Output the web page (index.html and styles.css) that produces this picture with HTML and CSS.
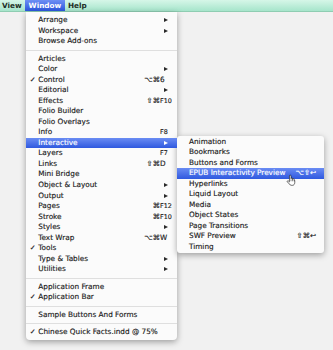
FILE: index.html
```html
<!DOCTYPE html>
<html lang="en">
<head>
  <meta charset="UTF-8">
  <title>Window menu</title>
  <link rel="stylesheet" href="styles.css">
</head>
<body>

  <div class="menubar">
    <span class="title first">View</span>
    <span class="title open">Window</span>
    <span class="title">Help</span>
  </div>

  <div class="menus">
    <div class="menu main">
      <div class="item"><span class="check"></span><span class="label">Arrange</span><span class="mods"></span><span class="key"><i class="arrow"></i></span></div>
      <div class="item"><span class="check"></span><span class="label">Workspace</span><span class="mods"></span><span class="key"><i class="arrow"></i></span></div>
      <div class="item"><span class="check"></span><span class="label">Browse Add-ons</span><span class="mods"></span><span class="key"></span></div>
      <div class="sep"></div>
      <div class="item"><span class="check"></span><span class="label">Articles</span><span class="mods"></span><span class="key"></span></div>
      <div class="item"><span class="check"></span><span class="label">Color</span><span class="mods"></span><span class="key"><i class="arrow"></i></span></div>
      <div class="item"><span class="check">✓</span><span class="label">Control</span><span class="mods">⌥⌘</span><span class="key">6</span></div>
      <div class="item"><span class="check"></span><span class="label">Editorial</span><span class="mods"></span><span class="key"><i class="arrow"></i></span></div>
      <div class="item"><span class="check"></span><span class="label">Effects</span><span class="mods">⇧⌘</span><span class="key small">F10</span></div>
      <div class="item"><span class="check"></span><span class="label">Folio Builder</span><span class="mods"></span><span class="key"></span></div>
      <div class="item"><span class="check"></span><span class="label">Folio Overlays</span><span class="mods"></span><span class="key"></span></div>
      <div class="item"><span class="check"></span><span class="label">Info</span><span class="mods"></span><span class="key small">F8</span></div>
      <div class="item active"><span class="check"></span><span class="label">Interactive</span><span class="mods"></span><span class="key"><i class="arrow"></i></span></div>
      <div class="item"><span class="check"></span><span class="label">Layers</span><span class="mods"></span><span class="key small">F7</span></div>
      <div class="item"><span class="check"></span><span class="label">Links</span><span class="mods">⇧⌘</span><span class="key">D</span></div>
      <div class="item"><span class="check"></span><span class="label">Mini Bridge</span><span class="mods"></span><span class="key"></span></div>
      <div class="item"><span class="check"></span><span class="label">Object &amp; Layout</span><span class="mods"></span><span class="key"><i class="arrow"></i></span></div>
      <div class="item"><span class="check"></span><span class="label">Output</span><span class="mods"></span><span class="key"><i class="arrow"></i></span></div>
      <div class="item"><span class="check"></span><span class="label">Pages</span><span class="mods">⌘</span><span class="key small">F12</span></div>
      <div class="item"><span class="check"></span><span class="label">Stroke</span><span class="mods">⌘</span><span class="key small">F10</span></div>
      <div class="item"><span class="check"></span><span class="label">Styles</span><span class="mods"></span><span class="key"><i class="arrow"></i></span></div>
      <div class="item"><span class="check"></span><span class="label">Text Wrap</span><span class="mods">⌥⌘</span><span class="key">W</span></div>
      <div class="item"><span class="check">✓</span><span class="label">Tools</span><span class="mods"></span><span class="key"></span></div>
      <div class="item"><span class="check"></span><span class="label">Type &amp; Tables</span><span class="mods"></span><span class="key"><i class="arrow"></i></span></div>
      <div class="item"><span class="check"></span><span class="label">Utilities</span><span class="mods"></span><span class="key"><i class="arrow"></i></span></div>
      <div class="sep"></div>
      <div class="item"><span class="check"></span><span class="label">Application Frame</span><span class="mods"></span><span class="key"></span></div>
      <div class="item"><span class="check">✓</span><span class="label">Application Bar</span><span class="mods"></span><span class="key"></span></div>
      <div class="sep"></div>
      <div class="item"><span class="check"></span><span class="label">Sample Buttons And Forms</span><span class="mods"></span><span class="key"></span></div>
      <div class="sep"></div>
      <div class="item"><span class="check">✓</span><span class="label">Chinese Quick Facts.indd @ 75%</span><span class="mods"></span><span class="key"></span></div>
    </div>

    <div class="menu sub">
      <div class="item"><span class="label">Animation</span><span class="mods"></span><span class="key"></span></div>
      <div class="item"><span class="label">Bookmarks</span><span class="mods"></span><span class="key"></span></div>
      <div class="item"><span class="label">Buttons and Forms</span><span class="mods"></span><span class="key"></span></div>
      <div class="item active"><span class="label">EPUB Interactivity Preview</span><span class="mods">⌥⇧</span><span class="key">↩</span>
        <svg class="cursor" viewBox="0 0 16 18" width="10" height="12">
          <path d="M5.5 11V2.5a1.25 1.25 0 0 1 2.5 0V7a1.25 1.25 0 0 1 2.5 0V8a1.25 1.25 0 0 1 2.5 0V9a1.2 1.2 0 0 1 1 1.2V13c0 2.5-1.5 4.5-3.5 4.5H8.5c-1.5 0-2.2-.8-3-2L2.2 12a1.1 1.1 0 0 1 1.6-1.5L5.5 12z" fill="#fff" stroke="#111" stroke-width="1"/>
          <path d="M8 8v3M10.5 8v3M13 9v2" stroke="#111" stroke-width=".8" fill="none"/>
        </svg>
      </div>
      <div class="item"><span class="label">Hyperlinks</span><span class="mods"></span><span class="key"></span></div>
      <div class="item"><span class="label">Liquid Layout</span><span class="mods"></span><span class="key"></span></div>
      <div class="item"><span class="label">Media</span><span class="mods"></span><span class="key"></span></div>
      <div class="item"><span class="label">Object States</span><span class="mods"></span><span class="key"></span></div>
      <div class="item"><span class="label">Page Transitions</span><span class="mods"></span><span class="key"></span></div>
      <div class="item"><span class="label">SWF Preview</span><span class="mods">⇧⌘</span><span class="key">↩</span></div>
      <div class="item"><span class="label">Timing</span><span class="mods"></span><span class="key"></span></div>
    </div>
  </div>

</body>
</html>
```

FILE: styles.css
```css
body { margin: 0; background: #f1f1f1; font-family: "DejaVu Sans", sans-serif; color: #1b1b1b; height: 350px; overflow: hidden; -webkit-text-stroke: .15px; }

.menubar { display: flex; height: 11px; background: linear-gradient(#d6f6e8, #a6e5cb); border-bottom: 1px solid #8fcdb2; font-weight: bold; font-size: 7.3px; line-height: 11px; -webkit-text-stroke: 0; }
.title { padding: 0 3.3px; color: #1e2e26; }
.title.first { padding-left: 2px; padding-right: 3.6px; }
.title.open { background: linear-gradient(#6d8ff4, #2c57de); color: #fff; }

.menus { display: flex; align-items: flex-start; padding-left: 26px; }
.menu { background: #fbfbfb; box-shadow: 0 2px 6px rgba(0, 0, 0, .35); border-radius: 0 0 4px 4px; font-size: 7.3px; }
.main { width: 151px; padding: 3px 0 2px; }
.sub { width: 147px; margin-top: 123.5px; padding: 1px 0; border-radius: 3px; }

.item { display: flex; align-items: center; height: 10.54px; line-height: 10.54px; white-space: nowrap; position: relative; }
.check { width: 11.3px; text-align: center; font-size: 7px; padding-left: 1px; }
.label { flex: 1; }
.mods { text-align: right; }
.key { width: 14px; padding-right: 3px; }
.key.small { font-size: 6.4px; }
.sub .label { padding-left: 12px; }
.sub .key { width: 10px; padding-right: 4px; }

.arrow { display: inline-block; margin-left: 4px; border-left: 4px solid #2a2a2a; border-top: 2.5px solid transparent; border-bottom: 2.5px solid transparent; vertical-align: middle; }
.active { background: linear-gradient(#6a8cf3, #2f59df); color: #fff; }
.active .arrow { border-left-color: #fff; }

.sep { height: 7px; display: flex; align-items: center; }
.sep::before { content: ""; flex: 1; height: 1px; background: #dfdfdf; }

.cursor { position: absolute; left: 109px; top: 6px; }
```
